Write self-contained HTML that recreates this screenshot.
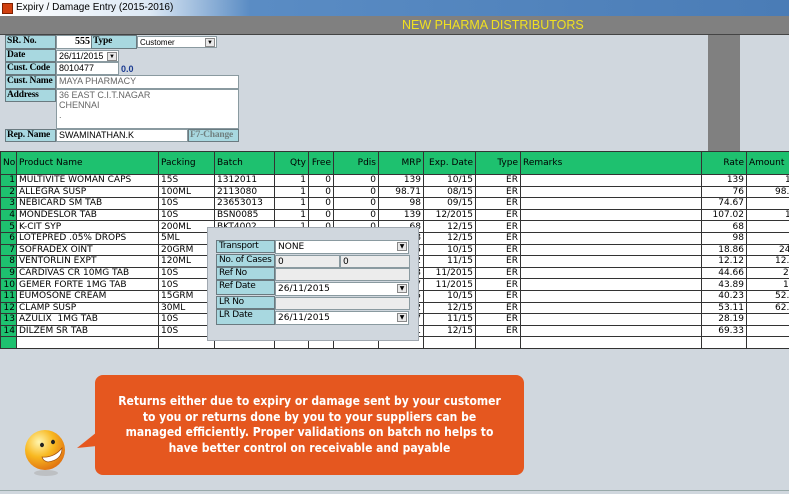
<!DOCTYPE html>
<html><head><style>
*{margin:0;padding:0;box-sizing:border-box}
body{width:789px;height:494px;background:#d0d7de;position:relative;overflow:hidden;font-family:"Liberation Sans",Tahoma,sans-serif}
.a{position:absolute}
.lbl{position:absolute;background:#a8d8e0;border:1px solid #6a7a80;font-family:"Liberation Serif",serif;font-size:9.5px;font-weight:bold;padding-left:1px;line-height:11px;white-space:nowrap;overflow:hidden;letter-spacing:-0.2px}
.inp{position:absolute;background:#fff;border:1px solid #8a9aa0;font-size:9px;line-height:11px;padding-left:2px;white-space:nowrap}
.dd{position:absolute;right:1px;top:1px;width:10px;height:9px;background:#e8e8e8;border:1px solid #888;font-size:6px;text-align:center;line-height:8px}
table{border-collapse:collapse;table-layout:fixed;width:806px;position:absolute;left:0;top:151px;font-size:9px;font-family:"DejaVu Sans",sans-serif}
td,th{border:1px solid #333;height:11.6px;padding:0 2px;white-space:nowrap;overflow:hidden;line-height:10px}
th{background:#1ec16f;height:23px;font-weight:normal;text-align:left}
td{background:#fff}
td.n{background:#1ec16f;text-align:right;padding:0 1px}
.r{text-align:right}
.pl{position:absolute;background:#a8d8e0;border:1px solid #6a7a80;font-size:9px;padding-left:2px;line-height:11px;font-family:"DejaVu Sans",sans-serif;white-space:nowrap;overflow:hidden;letter-spacing:-0.3px}
.pv{position:absolute;background:#fff;border:1px solid #8a9aa0;font-size:9px;padding-left:2px;line-height:12px;font-family:"DejaVu Sans",sans-serif}
.pg{background:#ececec}
</style></head><body>
<div class="a" style="left:0;top:0;width:789px;height:16px;background:linear-gradient(90deg,#fff 0,#dce8f4 150px,#5a8cc4 250px,#4a7cb6 100%);font-size:10px;line-height:16px;padding-left:16px;color:#000">Expiry / Damage Entry (2015-2016)</div>
<div class="a" style="left:2px;top:3px;width:11px;height:11px;background:#d04010;border:1px solid #802000"></div>
<div class="a" style="left:0;top:16px;width:789px;height:19px;background:#808080;border-bottom:1px solid #444"></div>
<div class="a" style="left:402px;top:17px;color:#f0e020;font-size:12.5px;line-height:17px">NEW PHARMA DISTRIBUTORS</div>
<div class="a" style="left:708px;top:35px;width:32px;height:116px;background:#808080"></div>

<div class="lbl" style="left:5px;top:35px;width:51px;height:14px">SR. No.</div>
<div class="inp" style="left:56px;top:35px;width:36px;height:14px;text-align:right;font-weight:bold;font-family:'Liberation Serif',serif;font-size:10px;padding-right:1px">555</div>
<div class="lbl" style="left:91px;top:35px;width:46px;height:14px">Type</div>
<div class="inp" style="left:137px;top:36px;width:80px;height:12px;font-size:8px">Customer<div class="dd">▼</div></div>
<div class="lbl" style="left:5px;top:49px;width:51px;height:13px">Date</div>
<div class="inp" style="left:56px;top:50px;width:63px;height:12px">26/11/2015<div class="dd">▼</div></div>
<div class="lbl" style="left:5px;top:62px;width:51px;height:13px">Cust. Code</div>
<div class="inp" style="left:56px;top:62px;width:63px;height:13px">8010477</div>
<div class="a" style="left:121px;top:64px;font-size:9px;font-weight:bold;color:#1a3a90">0.0</div>
<div class="lbl" style="left:5px;top:75px;width:51px;height:14px">Cust. Name</div>
<div class="inp" style="left:56px;top:75px;width:183px;height:14px;color:#666">MAYA PHARMACY</div>
<div class="lbl" style="left:5px;top:89px;width:51px;height:13px">Address</div>
<div class="inp" style="left:56px;top:89px;width:183px;height:40px;color:#666;line-height:10px">36 EAST C.I.T.NAGAR<br>CHENNAI<br>.</div>
<div class="lbl" style="left:5px;top:129px;width:51px;height:13px">Rep. Name</div>
<div class="inp" style="left:56px;top:129px;width:132px;height:13px">SWAMINATHAN.K</div>
<div class="lbl" style="left:188px;top:129px;width:51px;height:13px;color:#708080">F7-Change</div>

<table>
<colgroup><col style="width:16px"><col style="width:142px"><col style="width:56px"><col style="width:60px"><col style="width:34px"><col style="width:25px"><col style="width:45px"><col style="width:45px"><col style="width:52px"><col style="width:45px"><col style="width:181px"><col style="width:45px"><col style="width:60px"></colgroup>
<tr><th>No</th><th>Product Name</th><th>Packing</th><th>Batch</th><th class="r">Qty</th><th class="r">Free</th><th class="r">Pdis</th><th class="r">MRP</th><th class="r">Exp. Date</th><th class="r">Type</th><th>Remarks</th><th class="r">Rate</th><th>Amount</th></tr>
<tr><td class="n">1</td><td>MULTIVITE WOMAN CAPS</td><td>15S</td><td>1312011</td><td class="r">1</td><td class="r">0</td><td class="r">0</td><td class="r">139</td><td class="r">10/15</td><td class="r">ER</td><td></td><td class="r">139</td><td style="padding-left:38px">1</td></tr>
<tr><td class="n">2</td><td>ALLEGRA SUSP</td><td>100ML</td><td>2113080</td><td class="r">1</td><td class="r">0</td><td class="r">0</td><td class="r">98.71</td><td class="r">08/15</td><td class="r">ER</td><td></td><td class="r">76</td><td style="padding-left:28px">98.</td></tr>
<tr><td class="n">3</td><td>NEBICARD SM TAB</td><td>10S</td><td>23653013</td><td class="r">1</td><td class="r">0</td><td class="r">0</td><td class="r">98</td><td class="r">09/15</td><td class="r">ER</td><td></td><td class="r">74.67</td><td></td></tr>
<tr><td class="n">4</td><td>MONDESLOR TAB</td><td>10S</td><td>BSN0085</td><td class="r">1</td><td class="r">0</td><td class="r">0</td><td class="r">139</td><td class="r">12/2015</td><td class="r">ER</td><td></td><td class="r">107.02</td><td style="padding-left:38px">1</td></tr>
<tr><td class="n">5</td><td>K-CIT SYP</td><td>200ML</td><td>BKT4002</td><td class="r">1</td><td class="r">0</td><td class="r">0</td><td class="r">68</td><td class="r">12/15</td><td class="r">ER</td><td></td><td class="r">68</td><td></td></tr>
<tr><td class="n">6</td><td>LOTEPRED .05% DROPS</td><td>5ML</td><td></td><td></td><td></td><td></td><td class="r">98</td><td class="r">12/15</td><td class="r">ER</td><td></td><td class="r">98</td><td></td></tr>
<tr><td class="n">7</td><td>SOFRADEX OINT</td><td>20GRM</td><td></td><td></td><td></td><td></td><td class="r">25</td><td class="r">10/15</td><td class="r">ER</td><td></td><td class="r">18.86</td><td style="padding-left:32px">24</td></tr>
<tr><td class="n">8</td><td>VENTORLIN EXPT</td><td>120ML</td><td></td><td></td><td></td><td></td><td class="r">12</td><td class="r">11/15</td><td class="r">ER</td><td></td><td class="r">12.12</td><td style="padding-left:28px">12.</td></tr>
<tr><td class="n">9</td><td>CARDIVAS CR 10MG TAB</td><td>10S</td><td></td><td></td><td></td><td></td><td class="r">53</td><td class="r">11/2015</td><td class="r">ER</td><td></td><td class="r">44.66</td><td style="padding-left:36px">2</td></tr>
<tr><td class="n">10</td><td>GEMER FORTE 1MG TAB</td><td>10S</td><td></td><td></td><td></td><td></td><td class="r">57</td><td class="r">11/2015</td><td class="r">ER</td><td></td><td class="r">43.89</td><td style="padding-left:36px">1</td></tr>
<tr><td class="n">11</td><td>EUMOSONE CREAM</td><td>15GRM</td><td></td><td></td><td></td><td></td><td class="r">55</td><td class="r">10/15</td><td class="r">ER</td><td></td><td class="r">40.23</td><td style="padding-left:28px">52.</td></tr>
<tr><td class="n">12</td><td>CLAMP SUSP</td><td>30ML</td><td></td><td></td><td></td><td></td><td class="r">62</td><td class="r">12/15</td><td class="r">ER</td><td></td><td class="r">53.11</td><td style="padding-left:28px">62.</td></tr>
<tr><td class="n">13</td><td>AZULIX&nbsp; 1MG TAB</td><td>10S</td><td></td><td></td><td></td><td></td><td class="r">37</td><td class="r">11/15</td><td class="r">ER</td><td></td><td class="r">28.19</td><td></td></tr>
<tr><td class="n">14</td><td>DILZEM SR TAB</td><td>10S</td><td></td><td></td><td></td><td></td><td class="r">91</td><td class="r">12/15</td><td class="r">ER</td><td></td><td class="r">69.33</td><td></td></tr>
<tr><td class="n"></td><td></td><td></td><td></td><td></td><td></td><td></td><td></td><td></td><td></td><td></td><td></td><td></td></tr>
</table>

<div class="a" style="left:207px;top:227px;width:212px;height:114px;background:#d0d7de;border:1px solid #a0a8b0"></div>
<div class="pl" style="left:216px;top:240px;width:59px;height:13px">Transport</div>
<div class="pv" style="left:275px;top:240px;width:134px;height:14px">NONE<div class="dd">▼</div></div>
<div class="pl" style="left:216px;top:254px;width:59px;height:13px">No. of Cases</div>
<div class="pv pg" style="left:275px;top:255px;width:65px;height:13px">0</div>
<div class="pv pg" style="left:340px;top:255px;width:70px;height:13px">0</div>
<div class="pl" style="left:216px;top:267px;width:59px;height:13px">Ref No</div>
<div class="pv pg" style="left:275px;top:268px;width:135px;height:13px"></div>
<div class="pl" style="left:216px;top:280px;width:59px;height:15px">Ref Date</div>
<div class="pv" style="left:275px;top:282px;width:134px;height:14px">26/11/2015<div class="dd">▼</div></div>
<div class="pl" style="left:216px;top:296px;width:59px;height:13px">LR No</div>
<div class="pv pg" style="left:275px;top:297px;width:135px;height:13px"></div>
<div class="pl" style="left:216px;top:309px;width:59px;height:16px">LR Date</div>
<div class="pv" style="left:275px;top:311px;width:134px;height:14px">26/11/2015<div class="dd">▼</div></div>

<div class="a" style="left:95px;top:375px;width:429px;height:100px;background:#e5571f;border-radius:8px"></div>
<svg class="a" style="left:75px;top:430px" width="24" height="20"><polygon points="2,18 22,2 22,16" fill="#e5571f"/></svg>
<div class="a" style="left:95px;top:394px;width:429px;color:#fff;font-size:12px;font-weight:bold;line-height:15.5px;text-align:center;font-family:'DejaVu Sans Condensed','DejaVu Sans',sans-serif;white-space:nowrap">Returns either due to expiry or damage sent by your customer<br>to you or returns done by you to your suppliers can be<br>managed efficiently. Proper validations on batch no helps to<br>have better control on receivable and payable</div>
<svg class="a" style="left:22px;top:428px" width="48" height="50">
<defs><radialGradient id="g" cx="0.35" cy="0.3" r="0.75"><stop offset="0" stop-color="#fff6b0"/><stop offset="0.5" stop-color="#f8b820"/><stop offset="1" stop-color="#e07010"/></radialGradient></defs>
<ellipse cx="24" cy="45" rx="12" ry="3" fill="#b0b0b0" opacity="0.6"/>
<circle cx="23" cy="22" r="20" fill="url(#g)"/>
<ellipse cx="20" cy="17" rx="2" ry="2.2" fill="#222"/>
<ellipse cx="31" cy="14" rx="2" ry="2.2" fill="#222"/>
<path d="M20 29 Q32 30 40 20 Q40 32 26 34 Q21 33 20 29Z" fill="#fff" stroke="#a05010" stroke-width="0.7"/>
</svg>
<div class="a" style="left:0;top:490px;width:789px;height:4px;border-top:1px solid #9aa"></div>
</body></html>
